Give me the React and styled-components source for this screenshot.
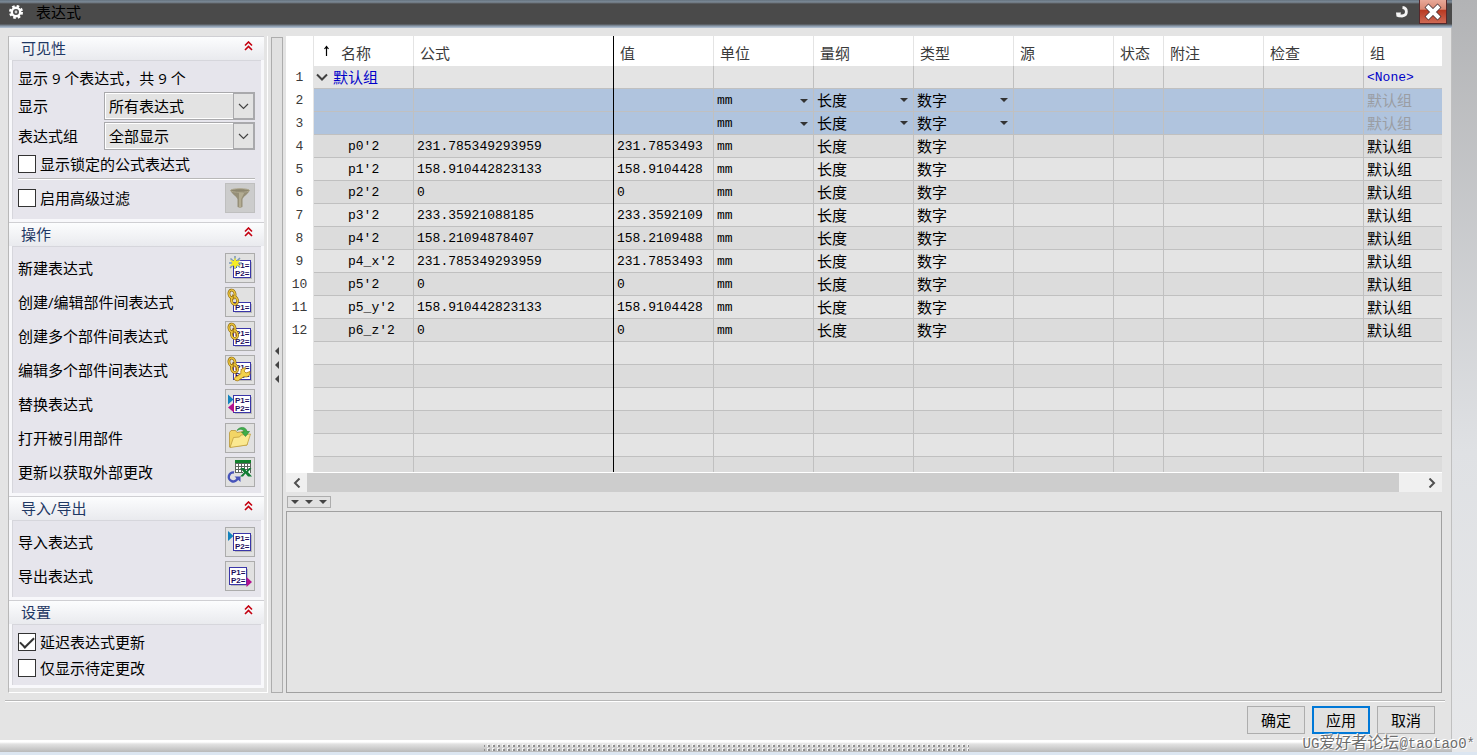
import {useState} from "react";
import styled, {createGlobalStyle, css} from "styled-components";

const columns = [
    {key: "name", title: "名称", width: 100},
    {key: "formula", title: "公式", width: 200},
    {key: "value", title: "值", width: 100},
    {key: "unit", title: "单位", width: 100},
    {key: "dimension", title: "量纲", width: 100},
    {key: "type", title: "类型", width: 100},
    {key: "source", title: "源", width: 100},
    {key: "status", title: "状态", width: 50},
    {key: "note", title: "附注", width: 100},
    {key: "check", title: "检查", width: 100},
    {key: "group", title: "组"},
];

const expressions = [
    {name: "p0'2", formula: "231.785349293959", value: "231.7853493"},
    {name: "p1'2", formula: "158.910442823133", value: "158.9104428"},
    {name: "p2'2", formula: "0", value: "0"},
    {name: "p3'2", formula: "233.35921088185", value: "233.3592109"},
    {name: "p4'2", formula: "158.21094878407", value: "158.2109488"},
    {name: "p4_x'2", formula: "231.785349293959", value: "231.7853493"},
    {name: "p5'2", formula: "0", value: "0"},
    {name: "p5_y'2", formula: "158.910442823133", value: "158.9104428"},
    {name: "p6_z'2", formula: "0", value: "0"},
];

const actions = [
    {label: "新建表达式", icon: "create"},
    {label: "创建/编辑部件间表达式", icon: "link"},
    {label: "创建多个部件间表达式", icon: "linkMany"},
    {label: "编辑多个部件间表达式", icon: "editMany"},
    {label: "替换表达式", icon: "replace"},
    {label: "打开被引用部件", icon: "open"},
    {label: "更新以获取外部更改", icon: "refresh"},
];

const transfers = [
    {label: "导入表达式", icon: "import"},
    {label: "导出表达式", icon: "export"},
];

function Sheet({x = 7.5, y = 6.5, single}) {
    return (
        <g>
            <rect x={x + 1.5} y={y + 1.5} width="17" height={single ? 9 : 17} fill="#b9b9b9"/>
            <rect x={x} y={y} width="17" height={single ? 9 : 17} fill="#ffffff" stroke="#3a36a8"/>
            <g fill="#1c0d5c" fontFamily="Liberation Sans, sans-serif" fontSize="8" fontWeight="bold">
                <text x={x + 1.5} y={y + 7.5}>P1=</text>
                {!single && <text x={x + 1.5} y={y + 15.5}>P2=</text>}
            </g>
        </g>
    )
}

function Chain() {
    return (
        <g fill="none">
            <g stroke="#8a6410" strokeWidth="2.8">
                <ellipse cx="6" cy="6" rx="3" ry="4" transform="rotate(-14 6 6)"/>
                <ellipse cx="8.5" cy="12.5" rx="3" ry="4" transform="rotate(-14 8.5 12.5)"/>
            </g>
            <g stroke="#ecc63c" strokeWidth="1.5">
                <ellipse cx="6" cy="6" rx="3" ry="4" transform="rotate(-14 6 6)"/>
                <ellipse cx="8.5" cy="12.5" rx="3" ry="4" transform="rotate(-14 8.5 12.5)"/>
            </g>
            <path d="M6.500 6.500l1.500 5" stroke="#a87c16" strokeWidth="1.200"/>
        </g>
    )
}

const icons = {
    filter: (
        <g>
            <path d="M4.500 6.500c.5 3 7 6.500 7 9v7c0 1.500 5 1.500 5 0v-7c0-2.500 6.500-6 7-9z" fill="#968f78"/>
            <path d="M13 8v15.500c1 .2 1.800 0 2.200-.3V15l3-6z" fill="#b3ac92"/>
            <ellipse cx="14" cy="6.500" rx="9.500" ry="1.800" fill="#8d866f" stroke="#aea78e"/>
        </g>
    ),
    create: (
        <g>
            <Sheet/>
            <g stroke="#7d99b8" strokeWidth="1.6">
                <path d="M9 2v13M3 9h13M4.500 4.500l9.500 9M14 4L4 14"/>
            </g>
            <path d="M9 3.500l1.500 3.500 4-1-2.500 3.200 3 2.800-4-.5-2 3.500-1.200-3.500-4.300 .5 3-3-2.500-3 3.700 1z" fill="#f6ee23"/>
        </g>
    ),
    link: <g><Sheet y={14.5} single/><Chain/></g>,
    linkMany: <g><Sheet/><Chain/></g>,
    editMany: (
        <g>
            <Sheet/>
            <Chain/>
            <path
                d="M10 24.500c-2-.5-2.500-3 0-3.500l5-3.500c-1-3 1.500-6.500 5-5.500l-2 3 2 2 4-1.500c.5 4-2.500 6.500-6 5l-5 3.500c-.5 1-1.500 1-3 .5z"
                fill="#f3d34c" stroke="#a97b12" strokeWidth="0.8"
            />
        </g>
    ),
    replace: (
        <g>
            <Sheet y={5.5}/>
            <path d="M2 4.500v10l5.500-5z" fill="#1382bd"/>
            <path d="M8 12.500v10L2 17.500z" fill="#b4108e"/>
        </g>
    ),
    open: (
        <g>
            <path d="M3.500 23V8.500l1.500-2h4.500l1.500 2 10-1.500v14z" fill="#f2d565" stroke="#b8963a" strokeWidth="0.8"/>
            <path d="M4 23.500l3.500-10 6-.5 1.500-2 9.500-1-3.500 11z" fill="#fbe991" stroke="#c2a03e" strokeWidth="0.8"/>
            <path d="M11 6.500c2-4 9-4.500 10 1h2.500l-4 5-4-4.500h2.500c-.5-3-4-3.500-7-1.500z" fill="#3fae49" stroke="#238434" strokeWidth="0.6"/>
        </g>
    ),
    refresh: (
        <g>
            <rect x="9" y="2" width="16" height="13" fill="#ffffff"/>
            <path d="M9.500 2v13M12.500 2v13M15.500 2v13M18.500 2v13M21.500 2v13M24.500 2v13M9 5.500h16M9 8.500h16M9 11.500h16M9 14.500h8" stroke="#5b665d"/>
            <rect x="9" y="2" width="16" height="3" fill="#11812c"/>
            <path d="M14 10h4l2.500 3 2.500-3h2.500l-3.500 4 4 4.500h-4L19.500 15.500 17 18.500h-3l4-4z" fill="#107c33"/>
            <path d="M8 14.500a4.500 4.500 0 1 0 3.500 6" fill="none" stroke="#4754ba" strokeWidth="2.400"/>
            <path d="M8.500 18.500h6v5.500z" fill="#4754ba"/>
        </g>
    ),
    import: (
        <g>
            <Sheet y={5.5}/>
            <path d="M2 3v10l5.500-5z" fill="#1382bd"/>
        </g>
    ),
    export: (
        <g>
            <Sheet x={3.5} y={5.5}/>
            <path d="M20.500 15v10l5.500-5z" fill="#b4108e"/>
        </g>
    ),
};

function ToolIcon({name}) {
    return <svg width="28" height="28" viewBox="0 0 28 28" aria-hidden="true">{icons[name]}</svg>
}

function Section({title, children, top, bottom}) {
    const [open, setOpen] = useState(true);

    return (
        <Group>
            <GroupHeader type="button" aria-expanded={open} onClick={() => setOpen(!open)}>
                <span>{title}</span>
                <svg width="9" height="10" viewBox="0 0 9 10" fill="none" stroke="#c40010" strokeWidth="1.6" aria-hidden="true">
                    <path d="M1 4.500L4.500 1 8 4.500M1 9l3.500-3.500L8 9"/>
                </svg>
            </GroupHeader>
            {open && <GroupBody $top={top} $bottom={bottom}>{children}</GroupBody>}
        </Group>
    )
}

function ToolRows({items}) {
    return items.map((item) => (
        <ToolRow key={item.label}>
            <span>{item.label}</span>
            <ToolButton type="button" aria-label={item.label}>
                <ToolIcon name={item.icon}/>
            </ToolButton>
        </ToolRow>
    ))
}

function Combo({id, label, value}) {
    return (
        <ComboRow>
            <ComboLabel htmlFor={id}>{label}</ComboLabel>
            <ComboBox>
                <ComboSelect id={id} defaultValue={value}>
                    <option>{value}</option>
                </ComboSelect>
                <ComboArrow>
                    <svg width="11" height="7" viewBox="0 0 11 7" fill="none" stroke="#444444" strokeWidth="1.2">
                        <path d="M1 1l4.500 4.500L10 1"/>
                    </svg>
                </ComboArrow>
            </ComboBox>
        </ComboRow>
    )
}

function Check({label, height, checked}) {
    return (
        <CheckLabel $height={height}>
            <CheckInput type="checkbox" defaultChecked={checked}/>
            <span>{label}</span>
        </CheckLabel>
    )
}

function CellCombo({label, value, mono}) {
    return (
        <CellBox>
            <CellSelect aria-label={label} defaultValue={value} $mono={mono}>
                <option>{value}</option>
            </CellSelect>
            <Caret/>
        </CellBox>
    )
}

function ExpressionTable() {
    const rows = [
        ...[0, 1].map(() => ({pending: true})),
        ...expressions,
        ...Array(6).fill({blank: true}),
    ];

    return (
        <TableArea>
            <Table>
                <colgroup>
                    <Col $width={28}/>
                    {columns.map((column) => <Col key={column.key} $width={column.width}/>)}
                </colgroup>
                <thead>
                    <tr>
                        <HeadCell aria-label="行"/>
                        {columns.map((column) => (
                            <HeadCell key={column.key} $pinned={column.key === "formula"}>
                                <HeadText>
                                    {column.key === "name" && (
                                        <svg width="7" height="13" viewBox="0 0 7 13" fill="none" stroke="#000000" aria-hidden="true">
                                            <path d="M3.500 11V2M1.500 4l2-2.500 2 2.500" strokeWidth="1.2"/>
                                        </svg>
                                    )}
                                    {column.title}
                                </HeadText>
                            </HeadCell>
                        ))}
                    </tr>
                </thead>
                <tbody>
                    <Row>
                        <RowNumber>1</RowNumber>
                        <Cell>
                            <GroupToggle type="button">
                                <svg width="12" height="8" viewBox="0 0 12 8" fill="none" stroke="#404040" strokeWidth="2" aria-hidden="true">
                                    <path d="M1 1.500l5 5 5-5"/>
                                </svg>
                                默认组
                            </GroupToggle>
                        </Cell>
                        <Cell $pinned/>
                        {columns.slice(2, -1).map((column) => <Cell key={column.key}/>)}
                        <Cell $mono $color="#0000c8">&lt;None&gt;</Cell>
                    </Row>
                    {rows.map((row, index) => (
                        <Row key={index} $pending={row.pending} $dark={index % 2 === 0}>
                            <RowNumber>{!row.blank && index + 2}</RowNumber>
                            <Cell $mono $indent>{row.name}</Cell>
                            <Cell $mono $pinned>{row.formula}</Cell>
                            <Cell $mono>{row.value}</Cell>
                            <Cell $mono>
                                {row.pending ? <CellCombo label="单位" value="mm" mono/> : !row.blank && "mm"}
                            </Cell>
                            <Cell>
                                {row.pending ? <CellCombo label="量纲" value="长度"/> : !row.blank && "长度"}
                            </Cell>
                            <Cell>
                                {row.pending ? <CellCombo label="类型" value="数字"/> : !row.blank && "数字"}
                            </Cell>
                            <Cell/>
                            <Cell/>
                            <Cell/>
                            <Cell/>
                            <Cell $color={row.pending ? "#9a9da3" : undefined}>{!row.blank && "默认组"}</Cell>
                        </Row>
                    ))}
                </tbody>
            </Table>
        </TableArea>
    )
}

function App() {
    return (
        <Screen>
            <GlobalStyle/>
            <Dialog>
                <TitleBar>
                    <svg width="16" height="16" viewBox="0 0 16 16" aria-hidden="true">
                        <circle cx="8" cy="8" r="5.500" fill="none" stroke="#ffffff" strokeWidth="3" strokeDasharray="2.4 1.920"/>
                        <circle cx="8" cy="8" r="4.200" fill="none" stroke="#ffffff" strokeWidth="2.400"/>
                        <circle cx="8" cy="8" r="1.400" fill="#d0d0d0"/>
                    </svg>
                    <Title>表达式</Title>
                    <TitleButton type="button" aria-label="重置">
                        <svg width="14" height="14" viewBox="0 0 14 14">
                            <path d="M7.500 2.500c5 .5 5.500 8-.5 8.500-1 0-2-.2-3-.8" fill="none" stroke="#f4f4f4" strokeWidth="2.800"/>
                            <path d="M1 7.500h5L4.500 12.500 1.500 11.500z" fill="#f4f4f4"/>
                        </svg>
                    </TitleButton>
                    <CloseButton type="button" aria-label="关闭">
                        <svg width="20" height="18" viewBox="0 0 20 18">
                            <path d="M3.500 2.500l13 13M16.500 2.500l-13 13" stroke="#4a3437" strokeWidth="5.600"/>
                            <path d="M4 3l12 12M16 3L4 15" stroke="#ffffff" strokeWidth="4"/>
                        </svg>
                    </CloseButton>
                </TitleBar>

                <Body>
                    <Sidebar>
                        <Section title="可见性" top={3} bottom={6}>
                            <Summary>显示 9 个表达式，共 9 个</Summary>
                            <ComboList>
                                <Combo id="show" label="显示" value="所有表达式"/>
                                <Combo id="group" label="表达式组" value="全部显示"/>
                            </ComboList>
                            <Check label="显示锁定的公式表达式" height={28}/>
                            <Divider/>
                            <ToolRow>
                                <Check label="启用高级过滤" height={30}/>
                                <ToolButton type="button" aria-label="过滤" disabled>
                                    <ToolIcon name="filter"/>
                                </ToolButton>
                            </ToolRow>
                        </Section>
                        <Section title="操作" top={6} bottom={6}>
                            <ToolList><ToolRows items={actions}/></ToolList>
                        </Section>
                        <Section title="导入/导出" top={6} bottom={6}>
                            <ToolList><ToolRows items={transfers}/></ToolList>
                        </Section>
                        <Section title="设置" top={4} bottom={4}>
                            <Check label="延迟表达式更新" height={26} checked/>
                            <Check label="仅显示待定更改" height={26}/>
                        </Section>
                    </Sidebar>

                    <Splitter type="button" aria-label="折叠侧栏">
                        <LeftTriangle/>
                        <LeftTriangle/>
                        <LeftTriangle/>
                    </Splitter>

                    <Main>
                        <ExpressionTable/>
                        <ScrollBar>
                            <ScrollButton type="button" aria-label="向左滚动">
                                <svg width="8" height="10" viewBox="0 0 8 10" fill="none" stroke="#505050" strokeWidth="2">
                                    <path d="M6.500 .5L2 5l4.500 4.500"/>
                                </svg>
                            </ScrollButton>
                            <Thumb/>
                            <ScrollButton type="button" aria-label="向右滚动">
                                <svg width="8" height="10" viewBox="0 0 8 10" fill="none" stroke="#505050" strokeWidth="2">
                                    <path d="M1.500 .5L6 5l-4.500 4.500"/>
                                </svg>
                            </ScrollButton>
                        </ScrollBar>
                        <Collapse type="button" aria-label="折叠面板">
                            <DownTriangle/>
                            <DownTriangle/>
                            <DownTriangle/>
                        </Collapse>
                        <Preview/>
                    </Main>
                </Body>

                <Footer>
                    <DialogButton type="button">确定</DialogButton>
                    <DialogButton type="button" $primary>应用</DialogButton>
                    <DialogButton type="button">取消</DialogButton>
                </Footer>
                <GripBar><Grip/></GripBar>
            </Dialog>
            <Backdrop/>
            <Watermark><small>UG</small>爱好者论坛<small>@taotao0*</small></Watermark>
        </Screen>
    )
}
export default App

const GlobalStyle = createGlobalStyle`
  * {
    box-sizing: border-box;
  }
  body {
    margin: 0;
    background: #e4e4e4;
    color: #000000;
    font: 15px/20px "Open Sans", "Noto Sans CJK SC", "Microsoft YaHei", sans-serif;
  }
  button, select, input {
    font: inherit;
    color: inherit;
    margin: 0;
    padding: 0;
  }
  svg {
    display: block;
    flex-shrink: 0;
  }
`
const Screen = styled.div`
  position: relative;
  display: flex;
  height: 100vh;
  overflow: hidden;
`
const Dialog = styled.main`
  flex: 1;
  min-width: 0;
  display: flex;
  flex-direction: column;
  background: #e4e4e4;
`
const Backdrop = styled.div`
  width: 25px;
  border-bottom: 3px solid #dce6f1;
  background: linear-gradient(#b2b3b5, #dfe1e4 60%, #e7e8ea);
`
const TitleBar = styled.header`
  height: 28px;
  display: flex;
  align-items: center;
  padding: 0 5px 4px 8px;
  background: linear-gradient(#66737f, #7d8b98 2px, #4a4a4a 4px, #4a4a4a 24px, #6b7580 25px, #9fb0c4 27px, #b8c4d2);
`
const Title = styled.h1`
  flex: 1;
  margin: 0 0 0 12px;
  font-size: 15px;
  font-weight: 400;
`
const TitleButton = styled.button`
  border: 0;
  background: none;
  margin-right: 10px;
`
const CloseButton = styled.button`
  width: 28px;
  height: 24px;
  display: flex;
  align-items: center;
  justify-content: center;
  border: 1px solid #57282b;
  border-top: 0;
  background: linear-gradient(#e8a898, #d98873 40%, #b93a22 45%, #cf6a55);
`
const Body = styled.div`
  flex: 1;
  min-height: 0;
  display: flex;
  gap: 3px;
  padding: 8px 9px 7px 8px;
  border-right: 1px solid #c0c0c0;
`
const Sidebar = styled.aside`
  width: 260px;
  flex-shrink: 0;
  padding-right: 3px;
  border-left: 1px solid #b8b8b8;
  border-right: 1px solid #ffffff;
  border-bottom: 1px solid #ffffff;
`
const Group = styled.section`
  padding-bottom: 3px;
  border-top: 1px solid #cfcfd3;
  background: #f8f8fb;
`
const GroupHeader = styled.button`
  width: 100%;
  height: 23px;
  display: flex;
  align-items: center;
  justify-content: space-between;
  padding: 0 11px 2px 12px;
  border: 0;
  background: linear-gradient(#fcfdfe, #e9eaee);
  color: #1f3864;

  svg {
    margin-bottom: 3px;
  }
`
const GroupBody = styled.div`
  margin: 0 3px;
  padding: ${({$top}) => $top}px 6px ${({$bottom}) => $bottom}px 5px;
  border-top: 1px solid #d6d6dc;
  border-left: 1px solid #d6d6dc;
  background: #e6e5ec;
`
const Summary = styled.div`
  line-height: 28px;
`
const ComboList = styled.div`
  display: grid;
  gap: 2px;
`
const ComboRow = styled.div`
  display: flex;
  align-items: center;
`
const ComboLabel = styled.label`
  width: 86px;
`
const ComboBox = styled.div`
  position: relative;
  flex: 1;
  height: 28px;
  border: 1px solid #a9a9ac;
`
const ComboSelect = styled.select`
  width: 100%;
  height: 100%;
  appearance: none;
  padding: 0 24px 0 3px;
  border: 1px solid #ffffff;
  border-radius: 0;
  background: #e3e3e3;
`
const ComboArrow = styled.span`
  position: absolute;
  top: 0;
  right: 0;
  bottom: 0;
  width: 21px;
  display: flex;
  align-items: center;
  justify-content: center;
  border: 1px solid #a9a9ac;
  background: #e3e3e3;
  pointer-events: none;
`
const CheckLabel = styled.label`
  height: ${({$height}) => $height}px;
  display: flex;
  align-items: center;
  gap: 4px;
`
const CheckInput = styled.input`
  width: 18px;
  height: 18px;
  appearance: none;
  border: 1px solid #333333;
  background: #ffffff;

  &:checked {
    display: grid;
    place-items: center;
  }
  &:checked::after {
    content: "";
    width: 12px;
    height: 6px;
    margin-bottom: 3px;
    border: solid #333333;
    border-width: 0 0 2px 2px;
    transform: rotate(-45deg);
  }
`
const Divider = styled.hr`
  height: 2px;
  margin: 0 0 3px;
  border: 0;
  border-top: 1px solid #b8b8b8;
  background: #ffffff;
`
const ToolList = styled.div`
  display: grid;
  gap: 4px;
`
const ToolRow = styled.div`
  display: flex;
  align-items: center;
  justify-content: space-between;
`
const ToolButton = styled.button`
  width: 30px;
  height: 30px;
  border: 1px solid #acacac;
  background: #e1e1e1;

  &:disabled {
    border-color: #bfbfbf;
    background: #cccccc;
  }
`
const Splitter = styled.button`
  width: 12px;
  margin-top: 1px;
  display: flex;
  flex-direction: column;
  align-items: center;
  justify-content: center;
  gap: 6px;
  border: 1px solid #adadad;
  background: #e1e1e1;
`
const LeftTriangle = styled.span`
  width: 4px;
  height: 8px;
  background: #444444;
  clip-path: polygon(100% 0, 100% 100%, 0 50%);
`
const Main = styled.div`
  flex: 1;
  min-width: 0;
  display: flex;
  flex-direction: column;
`
const TableArea = styled.div`
  flex: 1;
  min-height: 0;
  overflow: hidden;
`
const Table = styled.table`
  width: 100%;
  table-layout: fixed;
  border-collapse: separate;
  border-spacing: 0;
`
const Col = styled.col`
  width: ${({$width}) => $width ? `${$width}px` : "auto"};
`
const HeadCell = styled.th`
  height: 30px;
  padding: 4px 0 0 6px;
  border-right: 1px solid ${({$pinned}) => $pinned ? "#000000" : "#e4e4e4"};
  background: #ffffff;
  color: #3a3a3a;
  font-weight: 400;
  text-align: left;
  white-space: nowrap;

  &:last-child {
    border-right: 0;
  }
`
const HeadText = styled.div`
  display: flex;
  align-items: center;

  svg {
    margin: 0 11px 3px 3px;
  }
`
const Row = styled.tr`
  height: 23px;
  background: ${({$pending, $dark}) => $pending ? "#b0c4de" : $dark ? "#dcdcdc" : "#e4e4e4"};
`
const monoText = css`
  font-family: "Liberation Mono", "Courier New", monospace;
  font-size: 13px;
`
const Cell = styled.td`
  height: 23px;
  padding: ${({$mono}) => $mono ? "1px 3px 0" : "0 3px 1px"};
  padding-left: ${({$indent}) => $indent ? 34 : 3}px;
  border-right: 1px solid ${({$pinned}) => $pinned ? "#000000" : "#c0c0c0"};
  box-shadow: inset 0 -1px 0 #c0c0c0;
  color: ${({$color}) => $color || "#000000"};
  line-height: 22px;
  white-space: nowrap;
  ${({$mono}) => $mono && monoText}

  &:last-child {
    border-right: 0;
  }
`
const RowNumber = styled.td`
  padding: 1px 0 0;
  border-right: 1px solid #e4e4e4;
  background: #ffffff;
  color: #3a3a3a;
  text-align: center;
  line-height: 22px;
  ${monoText}
`
const GroupToggle = styled.button`
  display: flex;
  align-items: center;
  gap: 5px;
  border: 0;
  background: none;
  color: #0000c8;
  line-height: 22px;

  svg {
    margin-left: -1px;
  }
`
const CellBox = styled.div`
  position: relative;
  height: 22px;
`
const CellSelect = styled.select`
  width: 100%;
  height: 22px;
  appearance: none;
  border: 0;
  background: none;
  line-height: 22px;
  ${({$mono}) => $mono && monoText}
`
const Caret = styled.span`
  position: absolute;
  top: 9px;
  right: 2px;
  width: 8px;
  height: 4px;
  background: #333333;
  clip-path: polygon(0 0, 100% 0, 50% 100%);
  pointer-events: none;
`
const ScrollBar = styled.div`
  height: 20px;
  display: flex;
  border-top: 1px solid #ffffff;
  background: #f0f0f0;
`
const ScrollButton = styled.button`
  width: 21px;
  display: flex;
  align-items: center;
  justify-content: center;
  border: 0;
  background: none;
`
const Thumb = styled.div`
  flex: 1;
  margin-right: 22px;
  background: #cdcdcd;
`
const Collapse = styled.button`
  width: 44px;
  height: 12px;
  margin: 4px 0 3px 1px;
  display: flex;
  align-items: center;
  justify-content: center;
  gap: 6px;
  border: 1px solid #adadad;
  background: #e1e1e1;
`
const DownTriangle = styled.span`
  width: 8px;
  height: 4px;
  background: #444444;
  clip-path: polygon(0 0, 100% 0, 50% 100%);
`
const Preview = styled.section`
  height: 182px;
  flex-shrink: 0;
  border: 1px solid #a0a0a0;
`
const Footer = styled.footer`
  height: 40px;
  display: flex;
  justify-content: flex-end;
  gap: 7px;
  padding: 6px 16px 6px 0;
  border-right: 1px solid #c0c0c0;
  background:
    linear-gradient(#b8b8b8, #b8b8b8) 5px 0 / calc(100% - 11px) 1px no-repeat,
    linear-gradient(#ffffff, #ffffff) 5px 1px / calc(100% - 11px) 1px no-repeat;
`
const DialogButton = styled.button`
  width: 58px;
  height: 28px;
  border: ${({$primary}) => $primary ? "2px solid #0078d7" : "1px solid #adadad"};
  background: #e1e1e1;
`
const GripBar = styled.div`
  height: 15px;
  padding-top: 4px;
  border-bottom: 3px solid #dce6f1;
  background: linear-gradient(#ffffff 2px, #e2e2e2 4px, #b9b9b9);
`
const Grip = styled.div`
  width: 485px;
  height: 8px;
  margin: 0 auto;
  background:
    conic-gradient(from 90deg at 3px 2px, transparent 75%, #8f8f8f 0) 1px 1px / 5px 4px,
    conic-gradient(from 90deg at 3px 3px, transparent 75%, #f4f4f4 0) 0 0 / 5px 4px;
`
const Watermark = styled.div`
  position: absolute;
  right: 2px;
  bottom: 1px;
  color: #6d6d6d;
  font-size: 16px;
  text-shadow: -1px -1px 0 #ffffff, 1px 1px 0 #ffffff;

  small {
    font-family: "Liberation Mono", monospace;
    font-size: 14px;
  }
`
